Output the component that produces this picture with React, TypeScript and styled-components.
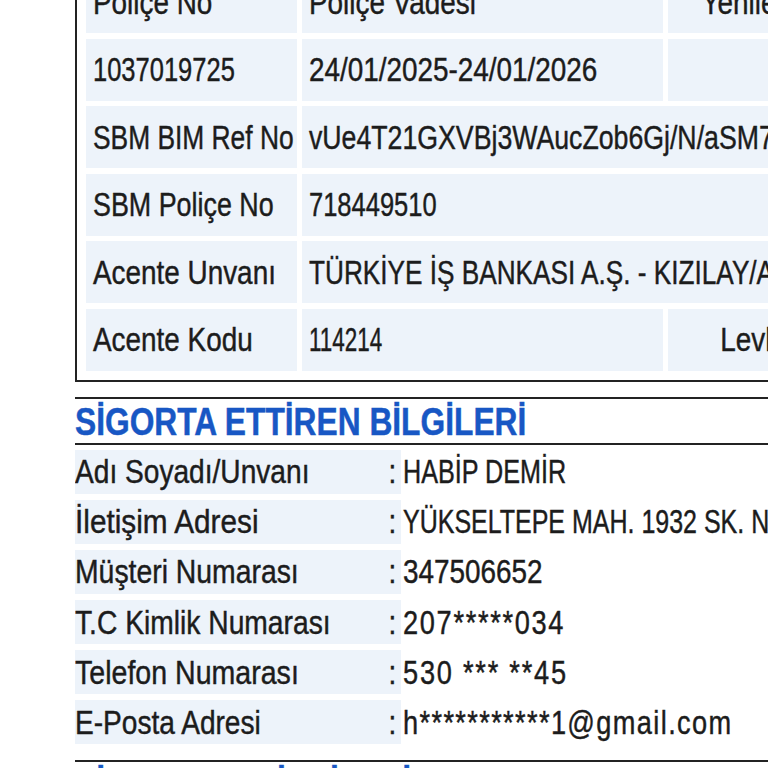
import styled, { createGlobalStyle } from "styled-components";

const GlobalStyle = createGlobalStyle`
    html, body {
        margin: 0;
        padding: 0;
        background: #ffffff;
        overflow: hidden;
    }
    body {
        font-family: "Liberation Sans", Arial, sans-serif;
        color: #1c1c1c;
    }
`;

// no narrow face installed: squeeze Liberation Sans to Arial Narrow widths
const NARROW = 0.82;

const Narrow = styled.span<{
    $align?: "left" | "center" | "right";
    $scale?: number;
    $spacing?: number;
}>`
    display: block;
    flex: none;
    width: ${(p) => 100 / (p.$scale ?? NARROW)}%;
    text-align: ${(p) => p.$align ?? "left"};
    letter-spacing: ${(p) => p.$spacing ?? 0}px;
    transform: scaleX(${(p) => p.$scale ?? NARROW});
    transform-origin: ${(p) => (p.$align === "right" ? "right" : "left")} center;
    white-space: nowrap;
    -webkit-text-stroke: 0.45px currentColor;
`;

const Page = styled.div`
    width: 1100px;
    margin-top: -40px;
    padding-left: 75px;
`;

const PolicyBox = styled.div`
    border: 2px solid #232323;
    padding: 9px;
`;

const PolicyGrid = styled.div`
    display: grid;
    grid-template-columns: 211px 361px 224px 1fr;
    grid-auto-rows: 62px;
    gap: 5.5px 5px;
`;

const Cell = styled.div<{ $span?: number }>`
    grid-column: span ${(p) => p.$span ?? 1};
    background: #edf3fa;
    display: flex;
    align-items: center;
    padding: 0 7px;
    font-size: 34px;
    overflow: hidden;
`;

const Heading = styled.h2`
    margin: 0;
    border-top: 2px solid #232323;
    border-bottom: 2px solid #232323;
    height: 44px;
    line-height: 46px;
    font-size: 38px;
    font-weight: bold;
    color: #1857c4;
    overflow: hidden;
`;

const FirstHeading = styled(Heading)`
    margin-top: 15px;
`;

const NextHeading = styled(Heading)`
    margin-top: 16px;
    border-bottom: none;
`;

const InfoList = styled.div`
    display: grid;
    grid-template-columns: 326px 1fr;
    grid-auto-rows: 44px;
    row-gap: 6.2px;
    margin-top: 5px;
`;

const InfoLabel = styled.div`
    background: #edf3fa;
    display: grid;
    grid-template-columns: minmax(0, 1fr) 20px;
    align-items: center;
    padding-right: 9px;
    font-size: 34px;
    overflow: hidden;
`;

const InfoValue = styled.div`
    display: flex;
    align-items: center;
    padding-left: 2px;
    font-size: 34px;
    overflow: hidden;
`;

type InfoItem = {
    label: string;
    value: string;
    labelScale?: number;
    valueScale?: number;
    valueSpacing?: number;
};

const insurer: InfoItem[] = [
    { label: "Adı Soyadı/Unvanı", value: "HABİP DEMİR", labelScale: 0.827, valueScale: 0.74 },
    {
        label: "İletişim Adresi",
        value: "YÜKSELTEPE MAH. 1932 SK. NO:12 YUNUSEMRE/MANİSA",
        labelScale: 0.875,
        valueScale: 0.735,
    },
    { label: "Müşteri Numarası", value: "347506652", labelScale: 0.834 },
    { label: "T.C Kimlik Numarası", value: "207*****034", labelScale: 0.83, valueScale: 0.8, valueSpacing: 2.1 },
    { label: "Telefon Numarası", value: "530 *** **45", labelScale: 0.84, valueScale: 0.8, valueSpacing: 2.2 },
    {
        label: "E-Posta Adresi",
        value: "h***********1@gmail.com",
        labelScale: 0.826,
        valueScale: 0.8,
        valueSpacing: 1.7,
    },
];

const InfoRow = ({ label, value, labelScale, valueScale, valueSpacing }: InfoItem) => (
    <>
        <InfoLabel>
            <Narrow $scale={labelScale}>{label}</Narrow>
            <Narrow $align="right">:</Narrow>
        </InfoLabel>
        <InfoValue>
            <Narrow $scale={valueScale} $spacing={valueSpacing}>
                {value}
            </Narrow>
        </InfoValue>
    </>
);

const App = () => {
    return (
        <>
            <GlobalStyle />
            <Page>
                <PolicyBox>
                    <PolicyGrid>
                        <Cell><Narrow>Poliçe No</Narrow></Cell>
                        <Cell><Narrow>Poliçe Vadesi</Narrow></Cell>
                        <Cell><Narrow $align="center">Yenileme No</Narrow></Cell>
                        <Cell><Narrow>Tanzim Tarihi</Narrow></Cell>

                        <Cell><Narrow $scale={0.75}>1037019725</Narrow></Cell>
                        <Cell><Narrow>24/01/2025-24/01/2026</Narrow></Cell>
                        <Cell><Narrow $align="center">0</Narrow></Cell>
                        <Cell><Narrow>24/01/2025</Narrow></Cell>

                        <Cell><Narrow $scale={0.775}>SBM BIM Ref No</Narrow></Cell>
                        <Cell $span={3}><Narrow $scale={0.785}>vUe4T21GXVBj3WAucZob6Gj/N/aSM71</Narrow></Cell>

                        <Cell><Narrow $scale={0.79}>SBM Poliçe No</Narrow></Cell>
                        <Cell $span={3}><Narrow $scale={0.75}>718449510</Narrow></Cell>

                        <Cell><Narrow>Acente Unvanı</Narrow></Cell>
                        <Cell $span={3}><Narrow $scale={0.77}>TÜRKİYE İŞ BANKASI A.Ş. - KIZILAY/ANKARA</Narrow></Cell>

                        <Cell><Narrow>Acente Kodu</Narrow></Cell>
                        <Cell><Narrow $scale={0.66}>114214</Narrow></Cell>
                        <Cell><Narrow $align="center">Levha No</Narrow></Cell>
                        <Cell><Narrow>T0932</Narrow></Cell>
                    </PolicyGrid>
                </PolicyBox>

                <FirstHeading><Narrow $scale={0.835}>SİGORTA ETTİREN BİLGİLERİ</Narrow></FirstHeading>
                <InfoList>
                    {insurer.map((item) => (
                        <InfoRow key={item.label} {...item} />
                    ))}
                </InfoList>
                <NextHeading><Narrow $scale={0.835}>SİGORTALI BİLGİLERİ</Narrow></NextHeading>
            </Page>
        </>
    );
};

export default App;
